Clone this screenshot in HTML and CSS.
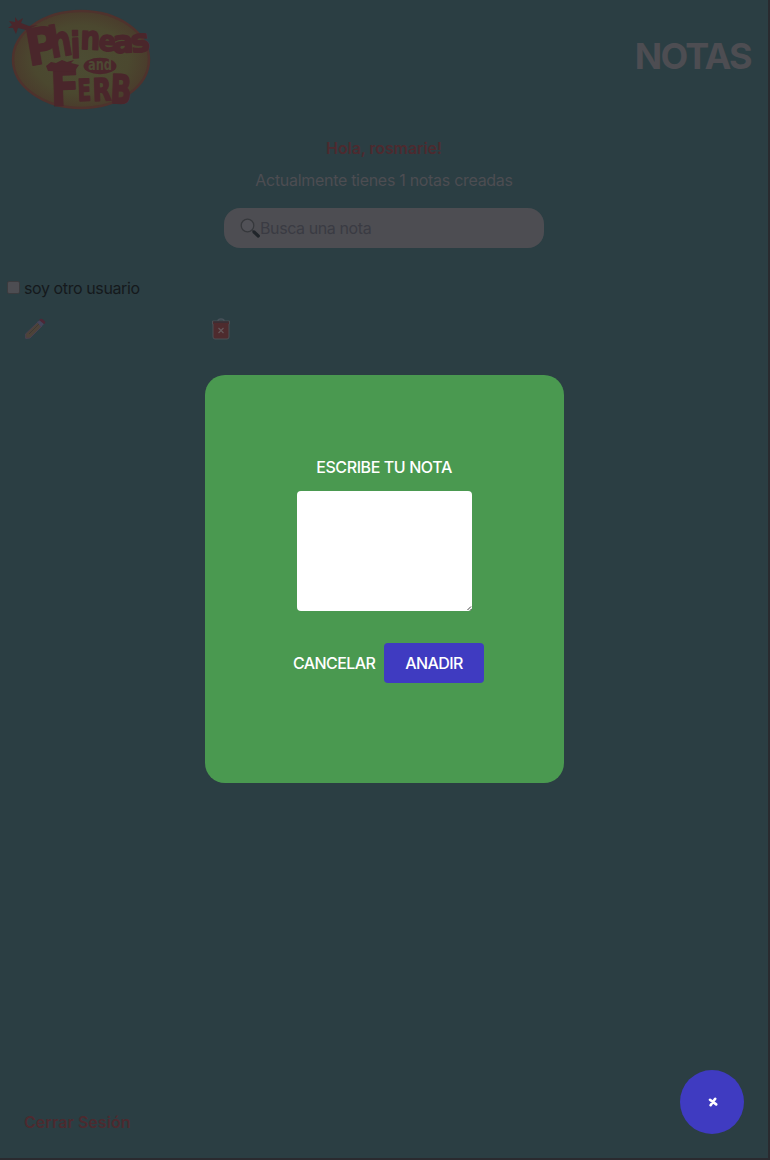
FILE: index.html
```html
<!DOCTYPE html>
<html lang="es">
<head>
<meta charset="UTF-8">
<title>Notas</title>
<link rel="stylesheet" href="styles.css">
</head>
<body>
<div class="page">
  <header class="header">
    <svg class="logo" viewBox="0 0 160 120" role="img" aria-label="Phineas and Ferb">
      <defs>
        <radialGradient id="oval"><stop offset="0" stop-color="#4c4c33"/><stop offset=".7" stop-color="#4b482f"/><stop offset="1" stop-color="#4a3c2c"/></radialGradient>
      </defs>
      <ellipse cx="81" cy="59.500" rx="68" ry="48.500" fill="url(#oval)" stroke="#4f322d" stroke-width="2.500"/>
      <path class="star" d="M8 28l4-3-3-4 6 1 0-5 3 4 5-3-2 5 8 3 9-1-12 5-8-2-2 6-3-6z"/>
      <g class="lettering">
        <text font-size="50" transform="translate(29 66) rotate(-10) scale(.9 1)">P</text>
        <text font-size="43" transform="translate(52 58) rotate(-10) scale(.72 1)">h</text>
        <text font-size="36" transform="translate(71 58) rotate(-2) scale(.8 1)">i</text>
        <text font-size="33" transform="translate(80 49) rotate(2) scale(.85 1)">n</text>
        <text font-size="28" transform="translate(98 50) rotate(5) scale(.9 1)">e</text>
        <text font-size="31" transform="translate(113 53) rotate(-2)">a</text>
        <text font-size="32" transform="translate(132 53) rotate(-8)">s</text>
        <text font-size="52" transform="translate(51 106) rotate(-2) scale(.82 1)">F</text>
        <text font-size="30" transform="translate(78 101) rotate(-2) scale(.65 1)">E</text>
        <text font-size="31" transform="translate(93 101) rotate(-2) scale(.78 1)">R</text>
        <text font-size="40" transform="translate(110 103) rotate(2) scale(.69 1)">B</text>
      </g>
      <path class="star" d="M46 66l5-4 5 1 6-3 5 2 7-2-3 3 8 2-5 7-26-1z"/>
      <ellipse cx="100" cy="66" rx="16.500" ry="8.300" fill="#4a262b"/>
      <text class="and" x="88" y="70" textLength="24" lengthAdjust="spacingAndGlyphs">and</text>
    </svg>
    <h1 class="title">NOTAS</h1>
  </header>

  <main class="content">
    <p class="greeting"><span class="greeting-text">Hola, rosmarie!</span></p>
    <p class="count">Actualmente tienes 1 notas creadas</p>
    <div class="search">
      <svg class="search-icon" viewBox="0 0 20 20"><circle cx="7.500" cy="7.500" r="6.300" fill="#515157" stroke="#36383c" stroke-width="1.300"/><path d="M12 12l2 2" stroke="#36383c" stroke-width="1.500"/><path d="M14 14l4.300 4" stroke="#20252a" stroke-width="3.200" stroke-linecap="round"/></svg>
      <span class="placeholder">Busca una nota</span>
    </div>
    <div class="other"><span class="checkbox"></span><span class="other-text">soy otro usuario</span></div>
    <div class="actions">
      <svg class="pencil" viewBox="0 0 22 22"><path d="M1 20.500l1-5.500 4 4z" fill="#51494c"/><path d="M1.500 16L14 4l4 4L6 20l-4 .500z" fill="#4d4339" stroke="#493f50"/><path d="M5 16L15 6" stroke="#3d3934"/><path d="M13 4l3-2 4 4-3 3z" fill="#44445a"/><path d="M15 2q2-2 4-.500l2 2Q22 5 20 6z" fill="#4d2736"/></svg>
      <svg class="trash" viewBox="0 0 18 22"><path d="M6 3Q6 1 9 1t3 2" fill="none" stroke="#48515a" stroke-width="1.500"/><path d="M.500 3h17v3H17v13q0 2-2 2H3q-2 0-2-2V6H.500z" fill="#4e2b2e" stroke="#4b5055"/><path d="M1.500 4h15" stroke="#363037" stroke-width="1.500"/><path d="M6.500 10l5 5m0-5l-5 5" stroke="#65575a" stroke-width="1.200"/></svg>
    </div>
  </main>
  <footer class="footer"><span class="logout">Cerrar Sesión</span></footer>
</div>

<section class="modal">
  <h2 class="modal-title">ESCRIBE TU NOTA</h2>
  <div class="note-box">
    <textarea class="note" aria-label="Nota"></textarea>
    <svg class="grip" viewBox="0 0 5 5"><path d="M.500 4L4 .500M3 4.500L4.500 3" stroke="#444" stroke-width="1"/></svg>
  </div>
  <div class="buttons">
    <button class="button cancel">CANCELAR</button>
    <button class="button add">ANADIR</button>
  </div>
</section>
<button class="fab" aria-label="Agregar nota">
  <svg class="fab-icon" viewBox="0 0 10 10"><path d="M7.200 1.800L2.600 8.200M2 2.800l6.200 4.600" stroke="#fff" stroke-width="2.600" stroke-linecap="round"/></svg>
</button>
</body>
</html>
```
FILE: styles.css
```css
* { box-sizing: border-box; }
body {
  margin: 0;
  height: 1160px;
  overflow: hidden;
  background: #2a2a2f;
  font: 16px/24px Inter, "Liberation Sans", sans-serif;
}
.page {
  width: 768px;
  height: 1158px;
  background: #2b3e43;
  display: flex;
  flex-direction: column;
}
.header { display: flex; justify-content: space-between; height: 120px; }
.logo { width: 160px; height: 120px; }
.lettering { font-family: "DejaVu Sans", sans-serif; font-weight: 700; fill: #4a262b; stroke: #4a262b; stroke-width: 1.500; stroke-linejoin: round; }
.star { fill: #4a262b; }
.and { font: 700 15px "DejaVu Sans", sans-serif; fill: #4d4933; }
.title { margin: 32px 17px 0 0; font-size: 36px; line-height: 48px; font-weight: 700; letter-spacing: -1.700px; color: #4d4d52; }
.content { display: flex; flex-direction: column; flex: 1; }
.greeting, .count { margin: 0; text-align: center; }
.greeting { margin-top: 16px; font-weight: 600; letter-spacing: -.1px; color: #4d2a2f; }
.count { margin-top: 8px; color: #4d4d52; letter-spacing: -.3px; }
.search {
  width: 320px; height: 40px; margin: 16px 0 0 224px; padding-left: 16px;
  border-radius: 16px; background: #4d4d52; color: #3a3b43;
  display: flex; align-items: center;
}
.search-icon { width: 20px; height: 20px; }
.placeholder { letter-spacing: -.4px; }
.other { display: flex; align-items: center; gap: 4px; margin: 28px 0 0 7px; color: #15191c; }
.other-text { letter-spacing: -.4px; }
.checkbox { width: 13px; height: 13px; margin-top: -1px; border: 1px solid #3b3b3e; border-radius: 2px; background: #4d4d52; }
.actions { display: flex; margin: 18px 0 0 24px; }
.pencil { width: 22px; height: 22px; }
.trash { width: 18px; height: 22px; margin-left: 165.500px; }
.footer { padding: 0 24px 24px; color: #4d2a2f; font-weight: 600; letter-spacing: .05px; }
.modal {
  position: absolute; left: 205px; top: 375px; width: 359px; height: 408px;
  border-radius: 20px; background: #4a9950; color: #fff;
  display: flex; flex-direction: column; align-items: center; padding-top: 80px;
}
.modal-title { margin: 0 1px 0 0; font-size: 16px; line-height: 24px; font-weight: 500; letter-spacing: -.4px; }
.note-box { position: relative; width: 175px; height: 120px; margin-top: 12px; }
.note { display: block; width: 100%; height: 100%; border: 0; border-radius: 4px; background: #fff; resize: none; }
.grip { position: absolute; right: 0; bottom: 0; width: 5px; height: 5px; }
.buttons { display: flex; margin: 32px 0 0 8px; gap: 9px; }
.button { height: 40px; padding: 0; border: 0; color: #fff; font: 500 16px/24px Inter, sans-serif; letter-spacing: -.6px; white-space: nowrap; }
.cancel { width: 82px; background: transparent; }
.add { width: 100px; border-radius: 4px; background: #3f3bc1; }
.fab {
  position: absolute; left: 680px; top: 1070px; width: 64px; height: 64px; padding: 0;
  border: 0; border-radius: 50%; background: #3f3bc1;
  display: flex; align-items: center; justify-content: center;
}
.fab-icon { width: 10px; height: 10px; margin-left: 2px; }
```
